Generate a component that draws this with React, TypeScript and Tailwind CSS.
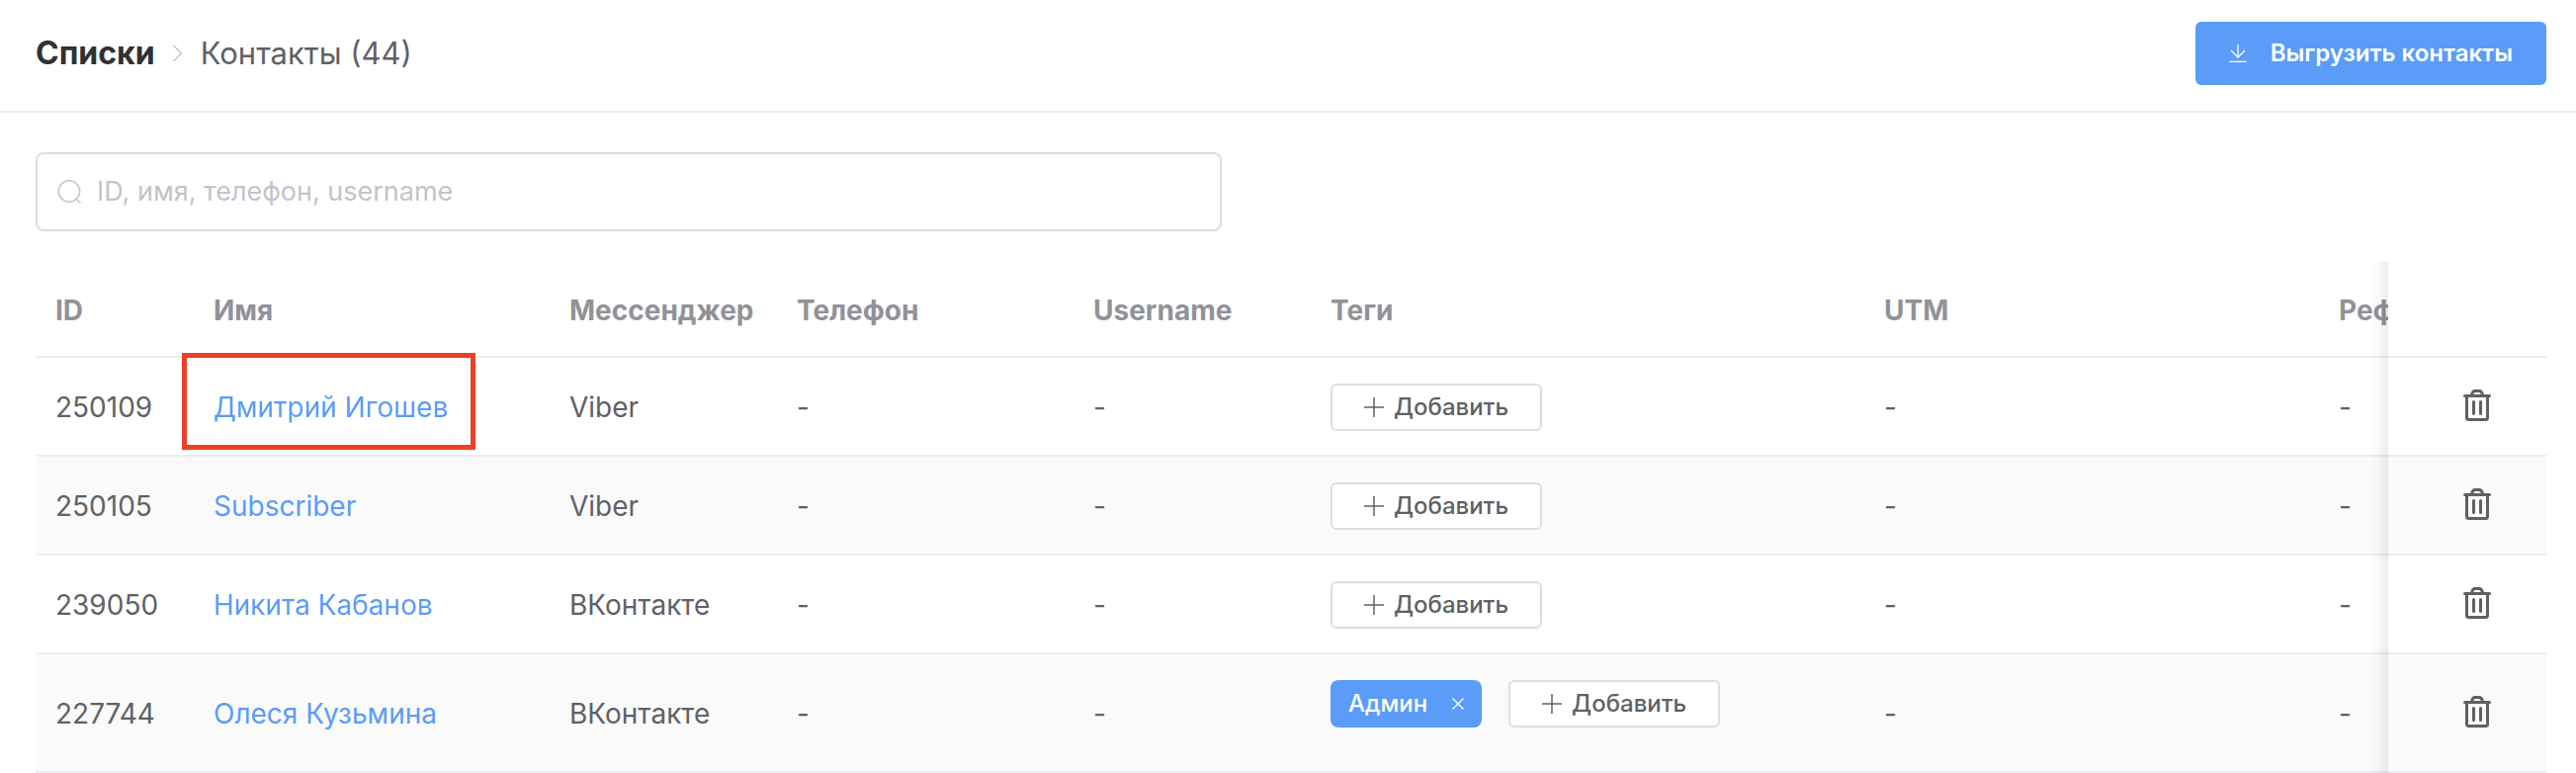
type Contact = {
  id: string;
  name: string;
  messenger: string;
  tags: string[];
  highlighted?: boolean;
};

const contacts: Contact[] = [
  { id: "250109", name: "Дмитрий Игошев", messenger: "Viber", tags: [], highlighted: true },
  { id: "250105", name: "Subscriber", messenger: "Viber", tags: [] },
  { id: "239050", name: "Никита Кабанов", messenger: "ВКонтакте", tags: [] },
  { id: "227744", name: "Олеся Кузьмина", messenger: "ВКонтакте", tags: ["Админ"] },
];

function ChevronIcon() {
  return (
    <svg width="12" height="20" viewBox="0 0 12 20" fill="none" stroke="#c0c4cc" strokeWidth="1.5" aria-hidden="true">
      <path d="M1.5 2l8 8-8 8" />
    </svg>
  );
}

function DownloadIcon() {
  return (
    <svg width="18" height="18" viewBox="0 0 18 18" fill="none" stroke="currentColor" strokeWidth="1.3" aria-hidden="true">
      <path d="M9 0v13M2 6l7 7 7-7M.3 17.300h17.500" />
    </svg>
  );
}

function SearchIcon() {
  return (
    <svg width="24" height="24" viewBox="0 0 24 24" fill="none" stroke="#c0c4cc" strokeWidth="1.5" aria-hidden="true">
      <circle cx="12" cy="11.500" r="10.700" />
      <path d="M19 19l4.500 4.500" />
    </svg>
  );
}

function PlusIcon() {
  return (
    <svg width="20" height="20" viewBox="0 0 20 20" fill="none" stroke="currentColor" strokeWidth="1.5" aria-hidden="true">
      <path d="M10 0v20M0 10h20" />
    </svg>
  );
}

function CloseIcon() {
  return (
    <svg width="12" height="12" viewBox="0 0 12 12" fill="none" stroke="currentColor" strokeWidth="1.4" aria-hidden="true">
      <path d="M.5.5l11 11M11.5.5l-11 11" />
    </svg>
  );
}

function TrashIcon() {
  return (
    <svg
      width="28"
      height="32"
      viewBox="0 0 28 32"
      fill="none"
      stroke="#606060"
      strokeWidth="3"
      strokeLinecap="round"
      strokeLinejoin="round"
      aria-hidden="true"
    >
      <path d="M1.5 6.5h25" />
      <path d="M8.500 5.500C9 3 10 1.500 12 1.500h4c2 0 3 1.500 3.500 4" />
      <path d="M3.500 7v21.500q0 2 2 2h17q2 0 2-2V7" />
      <path d="M10.500 12.500v12M17.500 12.500v12" />
    </svg>
  );
}

const headCell = "border-b-2 border-[#ecedf3] px-5 pt-7 pb-6 text-left font-bold whitespace-nowrap";
const bodyCell = "border-b-2 border-[#ecedf3] px-5 pt-[26px] pb-6 group-even:bg-[#fafafa]";
const pinned =
  "sticky right-0 bg-white pl-10 before:absolute before:top-0 before:-bottom-0.5 before:-left-5 before:w-5 before:bg-linear-to-l before:from-black/7 before:via-black/2 before:to-transparent";

function ContactRow({ contact }: { contact: Contact }) {
  return (
    <tr className="group">
      <td className={bodyCell}>{contact.id}</td>
      <td className={`${bodyCell} relative`}>
        <a href="#contact" className="whitespace-nowrap text-[#5a9cf8]">
          {contact.name}
        </a>
        {contact.highlighted && (
          <span className="pointer-events-none absolute -top-[5px] -left-3 z-10 h-[98px] w-[297px] border-5 border-[#ec4027]" />
        )}
      </td>
      <td className={bodyCell}>{contact.messenger}</td>
      <td className={bodyCell}>-</td>
      <td className={bodyCell}>-</td>
      <td className={bodyCell}>
        <div className={contact.tags.length > 0 ? "mb-5 flex gap-[27px]" : "flex"}>
          {contact.tags.map((tag) => (
            <span
              key={tag}
              className="flex h-12 items-center gap-[25px] rounded-lg bg-[#5a9cf8] px-[18px] text-2xl font-medium text-white"
            >
              {tag}
              <button type="button" aria-label={`Удалить тег ${tag}`}>
                <CloseIcon />
              </button>
            </span>
          ))}
          <button
            type="button"
            className="flex h-12 items-center gap-2.5 rounded-md border-2 border-[#dddde4] bg-white px-8 text-2xl font-medium"
          >
            <PlusIcon />
            Добавить
          </button>
        </div>
      </td>
      <td className={bodyCell}>-</td>
      <td className={bodyCell}>-</td>
      <td className={`${bodyCell} ${pinned}`}>
        <button type="button" aria-label={`Удалить контакт ${contact.name}`} className="mx-auto mb-1 block">
          <TrashIcon />
        </button>
      </td>
    </tr>
  );
}

export default function App() {
  return (
    <div className="bg-white font-['Inter','Liberation_Sans',sans-serif] text-[#606166]">
      <header className="flex items-center justify-between border-b-2 border-[#ededed] pt-[22px] pr-[30px] pb-[26px] pl-9">
        <nav className="flex items-center gap-[17px] text-[32px] leading-10">
          <a href="#lists" className="font-bold text-[#303133]">
            Списки
          </a>
          <ChevronIcon />
          <span className="text-[31px]">Контакты (44)</span>
        </nav>
        <button
          type="button"
          className="flex h-16 items-center gap-6 rounded-md bg-[#5a9cf8] px-[34px] text-2xl font-semibold text-white"
        >
          <DownloadIcon />
          Выгрузить контакты
        </button>
      </header>

      <main className="pt-10 pr-[30px] pl-9">
        <label className="flex h-20 max-w-[1200px] items-center gap-4 rounded-lg border-2 border-[#dddde4] px-5">
          <SearchIcon />
          <input
            type="search"
            aria-label="Поиск контактов"
            placeholder="ID, имя, телефон, username"
            className="min-w-0 flex-1 text-[27px] outline-none placeholder:text-[#c0c4cc]"
          />
        </label>

        <div className="mt-[30px] overflow-x-auto [scrollbar-width:none]">
          <table className="w-full min-w-[2710px] table-fixed border-separate border-spacing-0 text-[28px] leading-[44px]">
            <colgroup>
              <col className="w-40" />
              <col className="w-[360px]" />
              <col className="w-[230px]" />
              <col className="w-[300px]" />
              <col className="w-60" />
              <col className="w-[560px]" />
              <col className="w-[460px]" />
              <col />
              <col className="w-40" />
            </colgroup>
            <thead className="text-[#919298]">
              <tr>
                <th className={headCell}>ID</th>
                <th className={headCell}>Имя</th>
                <th className={headCell}>Мессенджер</th>
                <th className={headCell}>Телефон</th>
                <th className={headCell}>Username</th>
                <th className={headCell}>Теги</th>
                <th className={headCell}>UTM</th>
                <th className={headCell}>Реферал</th>
                <th className={`${headCell} ${pinned}`} aria-label="Действия" />
              </tr>
            </thead>
            <tbody>
              {contacts.map((contact) => (
                <ContactRow key={contact.id} contact={contact} />
              ))}
            </tbody>
          </table>
        </div>
      </main>
    </div>
  );
}
